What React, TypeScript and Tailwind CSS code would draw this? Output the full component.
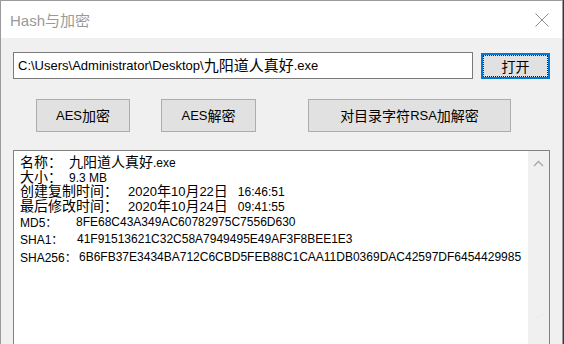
import React from "react";

const cjk = "font-['Noto_Sans_CJK_SC',sans-serif]";

function Btn({ className, children }: { className: string; children: React.ReactNode }) {
  return (
    <div
      className={`h-[33px] flex items-center justify-center border border-[#adadad] bg-[#e1e1e1] text-[13px] text-black ${className}`}
    >
      {children}
    </div>
  );
}

const line = "flex items-baseline h-[14.7px] leading-[14.7px] overflow-visible";

export default function App() {
  return (
    <div className="w-[564px] h-[344px] overflow-hidden bg-[#2b3a4a] font-['Liberation_Sans','Noto_Sans_CJK_SC',sans-serif]">
      <div className="w-[563px] h-[344px] overflow-hidden border-l border-t border-r border-[#9b9b9b] bg-[#f0f0f0] flex flex-col">
        <div className="h-[37px] shrink-0 bg-white flex items-center justify-between pl-[9px] pr-[13px]">
          <span className="text-[15px] text-[#9a9a9a] leading-none">
            Hash<span className={cjk}>与加密</span>
          </span>
          <svg width="14" height="14" viewBox="0 0 14 14" className="mt-[1px]">
            <path d="M0.5 0.5 L13.5 13.5 M13.5 0.5 L0.5 13.5" stroke="#8e8e8e" strokeWidth="1" fill="none" />
          </svg>
        </div>
        <div className="shrink-0 pl-[12px] pt-[14px] flex flex-col">
          <div className="flex items-start gap-[8px]">
            <div className="w-[460px] h-[27px] bg-white border border-[#7a7a7a] flex items-center pl-[4px] text-[13px] text-black whitespace-nowrap">
              C:\Users\Administrator\Desktop\<span className={`${cjk} text-[15px]`}>九阳道人真好</span>.exe
            </div>
            <div className="w-[69px] h-[26px] mt-[1px] border-2 border-[#0078d7] bg-[#e1e1e1] flex">
              <div className={`flex-1 border border-dotted border-[#222] flex items-center justify-center text-[14px] ${cjk} text-black`}>
                打开
              </div>
            </div>
          </div>
          <div className="flex mt-[20px]">
            <Btn className="ml-[23px] w-[94px]">
              AES<span className={`${cjk} text-[14px]`}>加密</span>
            </Btn>
            <Btn className="ml-[31px] w-[95px]">
              AES<span className={`${cjk} text-[14px]`}>解密</span>
            </Btn>
            <Btn className="ml-[52px] w-[203px]">
              <span className={`${cjk} text-[14px]`}>对目录字符</span>RSA<span className={`${cjk} text-[14px]`}>加解密</span>
            </Btn>
          </div>
          <div className="mt-[18px] w-[537px] h-[200px] border border-[#828282] bg-white flex">
            <div className="flex-1 pl-[6px] pt-[3px] text-black whitespace-nowrap">
              <div className={`${line} text-[13px]`}>
                <span className={`${cjk} text-[14px]`}>名称：</span>
                <span className={`${cjk} text-[14px] ml-[7px]`}>九阳道人真好</span>
                <span className="text-[12px]">.exe</span>
              </div>
              <div className={`${line} text-[12px]`}>
                <span className={`${cjk} text-[14px]`}>大小：</span>
                <span className="ml-[7px]">9.3 MB</span>
              </div>
              <div className={`${line} text-[13px]`}>
                <span className={`${cjk} text-[14px]`}>创建复制时间：</span>
                <span className="ml-[10px]">2020</span>
                <span className={`${cjk} text-[14px]`}>年</span>
                <span>10</span>
                <span className={`${cjk} text-[14px]`}>月</span>
                <span>22</span>
                <span className={`${cjk} text-[14px]`}>日</span>
                <span className="ml-[10px] text-[12px]">16:46:51</span>
              </div>
              <div className={`${line} text-[13px]`}>
                <span className={`${cjk} text-[14px]`}>最后修改时间：</span>
                <span className="ml-[10px]">2020</span>
                <span className={`${cjk} text-[14px]`}>年</span>
                <span>10</span>
                <span className={`${cjk} text-[14px]`}>月</span>
                <span>24</span>
                <span className={`${cjk} text-[14px]`}>日</span>
                <span className="ml-[10px] text-[12px]">09:41:55</span>
              </div>
              <div className="flex h-[17.5px] items-center leading-[17.5px] text-[12px] mt-[1px]">
                <span className="w-[56px]">MD5<span className={cjk}>：</span></span>
                <span>8FE68C43A349AC60782975C7556D630</span>
              </div>
              <div className="flex h-[17.5px] items-center leading-[17.5px] text-[12px]">
                <span className="w-[57px]">SHA1<span className={cjk}>：</span></span>
                <span>41F91513621C32C58A7949495E49AF3F8BEE1E3</span>
              </div>
              <div className="flex h-[17.5px] items-center leading-[17.5px] text-[12px]">
                <span className="w-[59px]">SHA256<span className={cjk}>：</span></span>
                <span>6B6FB37E3434BA712C6CBD5FEB88C1CAA11DB0369DAC42597DF6454429985</span>
              </div>
            </div>
            <div className="w-[21px] bg-[#f0f0f0] flex flex-col items-center">
              <svg width="11" height="7" viewBox="0 0 11 7" className="mt-[9px]">
                <path d="M1 6 L5.5 1.5 L10 6" stroke="#a6a6a6" strokeWidth="1.3" fill="none" />
              </svg>
              <svg width="11" height="7" viewBox="0 0 11 7" className="mt-[146px]">
                <path d="M1 1 L5.5 5.5 L10 1" stroke="#ececec" strokeWidth="1.3" fill="none" />
              </svg>
            </div>
          </div>
        </div>
      </div>
    </div>
  );
}
